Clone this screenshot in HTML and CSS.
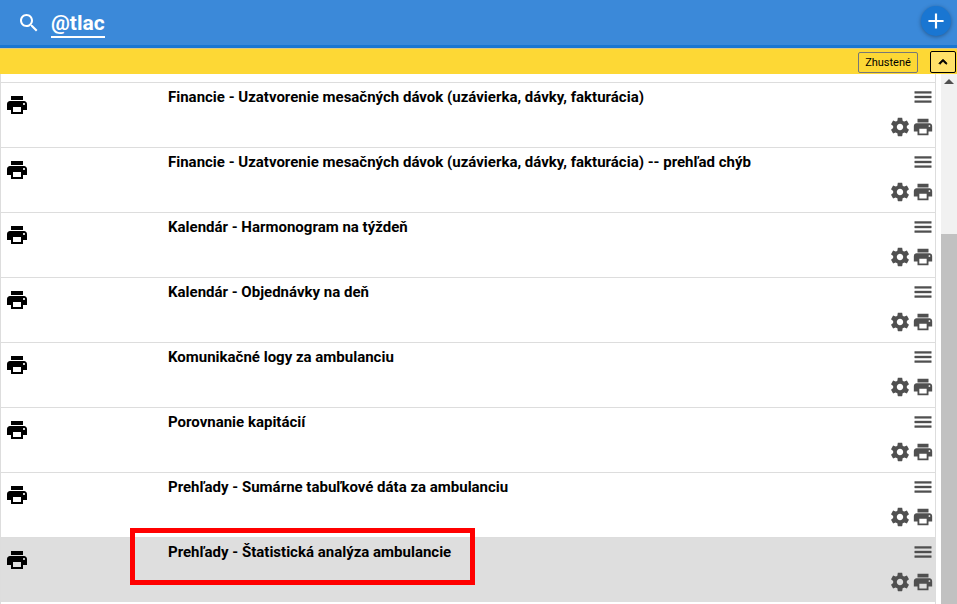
FILE: index.html
```html
<!DOCTYPE html>
<html lang="sk">
<head>
<meta charset="utf-8">
<title>@tlac</title>
<link rel="stylesheet" href="styles.css">
</head>
<body>
<svg class="defs" aria-hidden="true">
  <symbol id="print" viewBox="0 0 24 24"><path d="M19 8H5c-1.66 0-3 1.34-3 3v6h4v4h12v-4h4v-6c0-1.66-1.34-3-3-3zm-3 11H8v-5h8v5zm3-7c-.55 0-1-.45-1-1s.45-1 1-1 1 .45 1 1-.45 1-1 1zm-1-9H6v4h12V3z"/></symbol>
  <symbol id="gear" viewBox="0 0 24 24"><path d="M19.43 12.98c.04-.32.07-.64.07-.98s-.03-.66-.07-.98l2.11-1.65c.19-.15.24-.42.12-.64l-2-3.46c-.12-.22-.39-.3-.61-.22l-2.49 1c-.52-.4-1.08-.73-1.69-.98l-.38-2.65C14.46 2.18 14.25 2 14 2h-4c-.25 0-.46.18-.49.42l-.38 2.65c-.61.25-1.17.59-1.69.98l-2.49-1c-.23-.09-.49 0-.61.22l-2 3.46c-.13.22-.07.49.12.64l2.11 1.65c-.04.32-.07.65-.07.98s.03.66.07.98l-2.11 1.65c-.19.15-.24.42-.12.64l2 3.46c.12.22.39.3.61.22l2.49-1c.52.4 1.08.73 1.69.98l.38 2.65c.03.24.24.42.49.42h4c.25 0 .46-.18.49-.42l.38-2.65c.61-.25 1.17-.59 1.69-.98l2.49 1c.23.09.49 0 .61-.22l2-3.46c.12-.22.07-.49-.12-.64l-2.11-1.65zM12 15.5c-1.93 0-3.5-1.57-3.5-3.5s1.57-3.5 3.5-3.5 3.5 1.57 3.5 3.5-1.57 3.5-3.5 3.5z"/></symbol>
  <symbol id="menu" viewBox="0 0 24 24"><path d="M3 18h18v-2H3v2zm0-5h18v-2H3v2zm0-7v2h18V6H3z"/></symbol>
</svg>
<header class="topbar">
  <svg class="search-icon" viewBox="0 0 24 24"><path d="M15.5 14h-.79l-.28-.27C15.41 12.59 16 11.11 16 9.5 16 5.91 13.09 3 9.5 3S3 5.91 3 9.5 5.91 16 9.5 16c1.61 0 3.09-.59 4.23-1.57l.27.28v.79l5 4.99L20.49 19l-4.99-5zm-6 0C7.01 14 5 11.99 5 9.5S7.01 5 9.5 5 14 7.01 14 9.5 11.99 14 9.5 14z"/></svg>
  <span class="page-title">@tlac</span>
  <button class="fab" type="button"><svg viewBox="0 0 24 24"><path d="M19 13h-6v6h-2v-6H5v-2h6V5h2v6h6v2z"/></svg></button>
</header>
<div class="toolbar">
  <button class="dense" type="button">Zhustené</button>
  <button class="collapse" type="button"><svg viewBox="0 0 24 24"><path d="M7.41 15.41 12 10.83l4.59 4.58L18 14l-6-6-6 6z"/></svg></button>
</div>
<main class="content">
  <div class="list">
    <div class="row"><svg class="row-print"><use href="#print"/></svg><div class="row-title">Financie - Uzatvorenie mesačných dávok (uzávierka, dávky, fakturácia)</div><div class="row-actions"><svg class="act menu"><use href="#menu"/></svg><div class="act-line"><svg class="act"><use href="#gear"/></svg><svg class="act"><use href="#print"/></svg></div></div></div>
    <div class="row"><svg class="row-print"><use href="#print"/></svg><div class="row-title">Financie - Uzatvorenie mesačných dávok (uzávierka, dávky, fakturácia) -- prehľad chýb</div><div class="row-actions"><svg class="act menu"><use href="#menu"/></svg><div class="act-line"><svg class="act"><use href="#gear"/></svg><svg class="act"><use href="#print"/></svg></div></div></div>
    <div class="row"><svg class="row-print"><use href="#print"/></svg><div class="row-title">Kalendár - Harmonogram na týždeň</div><div class="row-actions"><svg class="act menu"><use href="#menu"/></svg><div class="act-line"><svg class="act"><use href="#gear"/></svg><svg class="act"><use href="#print"/></svg></div></div></div>
    <div class="row"><svg class="row-print"><use href="#print"/></svg><div class="row-title">Kalendár - Objednávky na deň</div><div class="row-actions"><svg class="act menu"><use href="#menu"/></svg><div class="act-line"><svg class="act"><use href="#gear"/></svg><svg class="act"><use href="#print"/></svg></div></div></div>
    <div class="row"><svg class="row-print"><use href="#print"/></svg><div class="row-title">Komunikačné logy za ambulanciu</div><div class="row-actions"><svg class="act menu"><use href="#menu"/></svg><div class="act-line"><svg class="act"><use href="#gear"/></svg><svg class="act"><use href="#print"/></svg></div></div></div>
    <div class="row"><svg class="row-print"><use href="#print"/></svg><div class="row-title">Porovnanie kapitácií</div><div class="row-actions"><svg class="act menu"><use href="#menu"/></svg><div class="act-line"><svg class="act"><use href="#gear"/></svg><svg class="act"><use href="#print"/></svg></div></div></div>
    <div class="row"><svg class="row-print"><use href="#print"/></svg><div class="row-title">Prehľady - Sumárne tabuľkové dáta za ambulanciu</div><div class="row-actions"><svg class="act menu"><use href="#menu"/></svg><div class="act-line"><svg class="act"><use href="#gear"/></svg><svg class="act"><use href="#print"/></svg></div></div></div>
    <div class="row selected"><svg class="row-print"><use href="#print"/></svg><div class="row-title">Prehľady - Štatistická analýza ambulancie</div><div class="row-actions"><svg class="act menu"><use href="#menu"/></svg><div class="act-line"><svg class="act"><use href="#gear"/></svg><svg class="act"><use href="#print"/></svg></div></div></div>
  </div>
  <div class="scrollbar"><span class="arrow"></span><div class="thumb"></div></div>
</main>
<div class="highlight"></div>
</body>
</html>
```
FILE: styles.css
```css
* { box-sizing: border-box; }
html, body { margin: 0; height: 100%; overflow: hidden; }
body { background: #fff; font-family: Roboto, sans-serif; color: #000; position: relative; }
.defs { display: none; }

.topbar {
  height: 48px;
  background: #3b89d9;
  border-bottom: 3px solid #1976d2;
  display: flex;
  align-items: flex-start;
  padding: 0 6px 0 17px;
  position: relative;
}
.search-icon { width: 24px; height: 24px; fill: #fff; margin-top: 11px; }
.page-title {
  margin: 11px 0 0 10px;
  font-size: 21px;
  line-height: 25px;
  font-weight: 700;
  color: #fff;
  border-bottom: 2px solid #fff;
}
.fab {
  margin: 6px 0 0 auto;
  width: 30px;
  height: 30px;
  border: 0;
  padding: 2px;
  border-radius: 50%;
  background: #1976d2;
  box-shadow: 0 1px 4px rgba(0,0,0,.35);
}
.fab svg { display: block; width: 26px; height: 26px; fill: #fff; }

.toolbar {
  height: 26px;
  background: #fdd835;
  border-top: 1px solid #d8c98a;
  display: flex;
  align-items: flex-start;
  justify-content: flex-end;
  padding: 2px 1px 0 0;
}
.dense {
  width: 60px;
  height: 21px;
  margin-top: 1px;
  padding: 0;
  font: 400 11px Roboto, sans-serif;
  color: #000;
  background: #fdd835;
  border: 1px solid #777;
  border-radius: 2px;
  margin-right: 12px;
}
.collapse {
  width: 26px;
  height: 22px;
  padding: 0;
  background: #ffe168;
  border: 1px solid #000;
  border-radius: 2px;
  display: flex;
  align-items: center;
  justify-content: center;
}
.collapse svg { width: 16px; height: 16px; stroke: #000; stroke-width: 1.5; }

.content { display: flex; height: 530px; }
.list {
  width: 936px;
  padding-top: 8px;
  border-left: 1px solid #ddd;
  border-right: 1px solid #ddd;
  overflow: hidden;
}
.row {
  height: 65px;
  border-top: 1px solid #ddd;
  display: flex;
}
.row.selected { background: #dedede; }
.row-print { width: 24px; height: 24px; margin: 10px 0 0 4px; flex: none; }
.row-title {
  margin: 4px 0 0 139px;
  font-size: 15px;
  line-height: 20px;
  font-weight: 700;
  flex: 1;
}
.row-actions {
  width: 46px;
  padding: 3px 1px 0 0;
  display: flex;
  flex-direction: column;
  align-items: flex-end;
  flex: none;
}
.act { width: 22px; height: 22px; fill: #505050; display: block; flex: none; }
.menu { stroke: #505050; stroke-width: .5; }
.act-line { display: flex; gap: 1px; margin-top: 8px; }

.scrollbar { margin-left: 5px; width: 16px; background: #f1f1f1; position: relative; }
.arrow {
  position: absolute;
  left: 3px;
  top: 5px;
  border-left: 5px solid transparent;
  border-right: 5px solid transparent;
  border-bottom: 5px solid #505050;
}
.thumb { position: absolute; left: 0; right: 0; top: 160px; height: 370px; background: #c1c1c1; }

.highlight {
  position: absolute;
  left: 130px;
  top: 528px;
  width: 345px;
  height: 57px;
  border: 5px solid #f00;
  pointer-events: none;
}
```
